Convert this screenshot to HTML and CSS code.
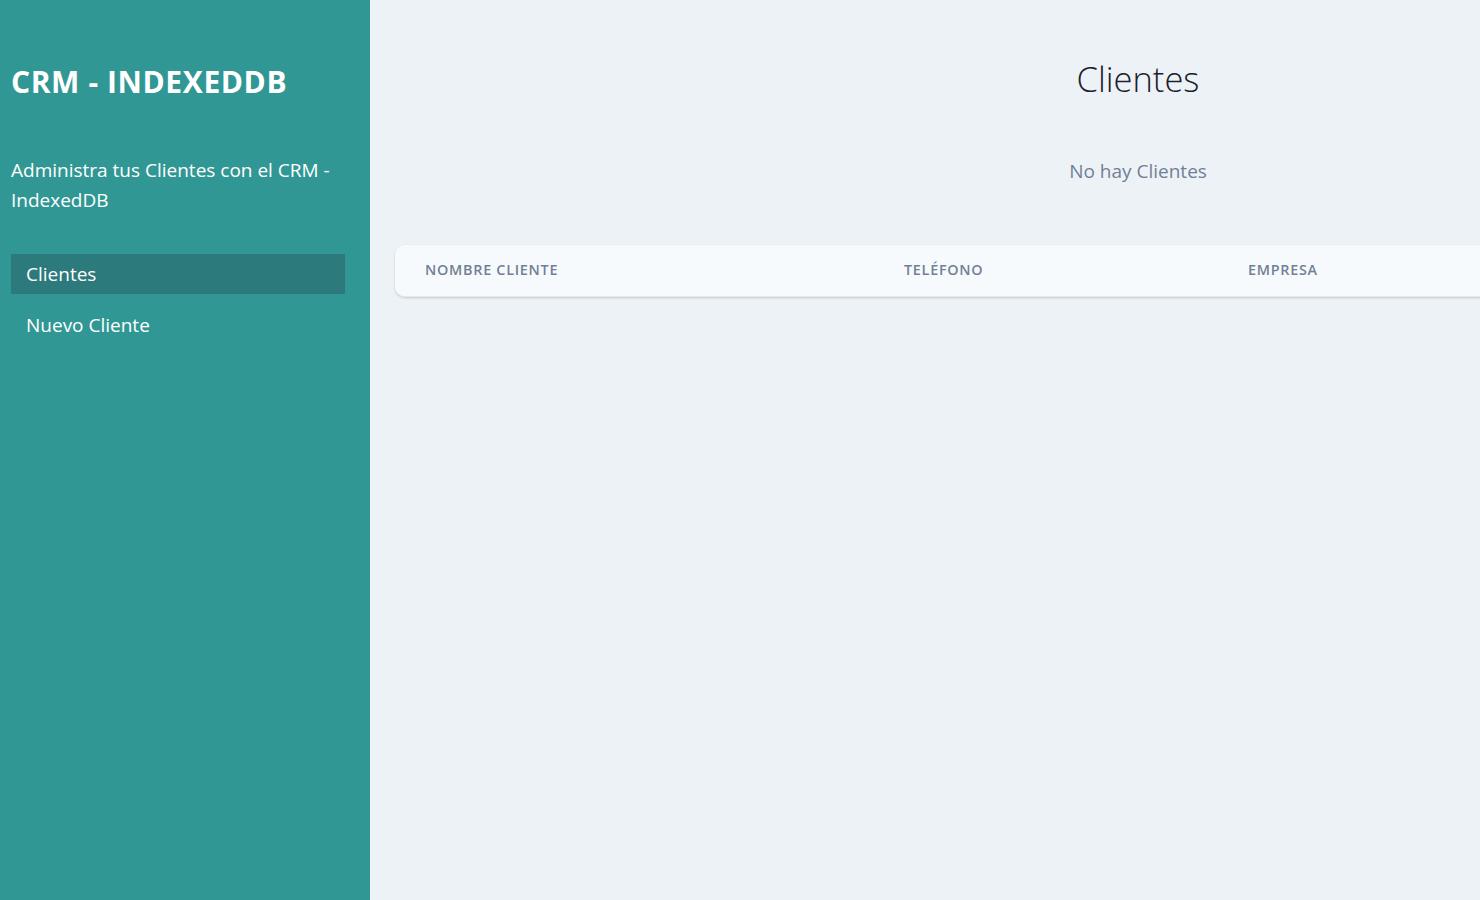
FILE: index.html
```html
<!DOCTYPE html>
<html lang="es">
<head>
<meta charset="utf-8">
<title>CRM - IndexedDB</title>
<link rel="stylesheet" href="styles.css">
</head>
<body>
<div class="layout">
  <aside class="sidebar">
    <h1 class="brand">CRM - IndexedDB</h1>
    <p class="lead">Administra tus Clientes con el CRM - IndexedDB</p>
    <nav class="nav">
      <a href="#" class="nav-link active">Clientes</a>
      <a href="#" class="nav-link">Nuevo Cliente</a>
    </nav>
  </aside>
  <main class="main">
    <h2 class="page-title">Clientes</h2>
    <p class="empty">No hay Clientes</p>
    <div class="table-wrap">
      <table class="table">
        <thead>
          <tr>
            <th class="col-name">Nombre Cliente</th>
            <th class="col-phone">Teléfono</th>
            <th class="col-company">Empresa</th>
          </tr>
        </thead>
        <tbody></tbody>
      </table>
    </div>
  </main>
</div>
</body>
</html>
```

FILE: styles.css
```css
html, body {
  margin: 0;
  padding: 0;
  overflow: hidden;
  height: 100%;
}
body {
  font-family: "Open Sans", "Noto Sans", sans-serif;
  background: #edf2f7;
}
.layout {
  display: flex;
  min-height: 900px;
}
.sidebar {
  flex: 0 0 370px;
  box-sizing: border-box;
  background: #319795;
  padding: 50px 25px 50px 11px;
  min-height: 900px;
}
.brand {
  margin: 12px 0 0 0;
  color: #fff;
  text-transform: uppercase;
  font-weight: 700;
  font-size: 30px;
  line-height: 40px;
  letter-spacing: 0.02em;
}
.lead {
  margin: 53px 0 0 0;
  color: #fff;
  font-size: 19px;
  line-height: 30px;
}
.nav {
  margin-top: 39px;
  display: flex;
  flex-direction: column;
  gap: 11px;
}
.nav-link {
  display: block;
  padding: 5px 15px;
  color: #fff;
  text-decoration: none;
  font-size: 19px;
  line-height: 30px;
}
.nav-link.active {
  background: #2c7a7b;
}
.main {
  flex: 0 0 1536px;
  box-sizing: border-box;
  padding: 51px 25px;
}
.page-title {
  margin: 0;
  text-align: center;
  font-weight: 300;
  font-size: 34.5px;
  line-height: 56px;
  color: #1a202c;
}
.empty {
  margin: 49px 0 0 0;
  text-align: center;
  color: #718096;
  font-size: 19px;
  line-height: 30px;
}
.table-wrap {
  margin-top: 59px;
  border-radius: 10px;
  overflow: hidden;
  box-shadow: 0 1px 3px rgba(0,0,0,0.12), 0 1px 2px rgba(0,0,0,0.06);
  border-bottom: 1px solid #e2e8f0;
}
.table {
  width: 100%;
  border-collapse: collapse;
  table-layout: fixed;
}
.table th {
  box-sizing: border-box;
  background: #f7fafc;
  padding: 15px 30px 16px;
  text-align: left;
  font-size: 14.4px;
  line-height: 20px;
  font-weight: 600;
  color: #718096;
  text-transform: uppercase;
  letter-spacing: 0.05em;
}
.col-name { width: 479px; }
.col-phone { width: 344px; }
```
